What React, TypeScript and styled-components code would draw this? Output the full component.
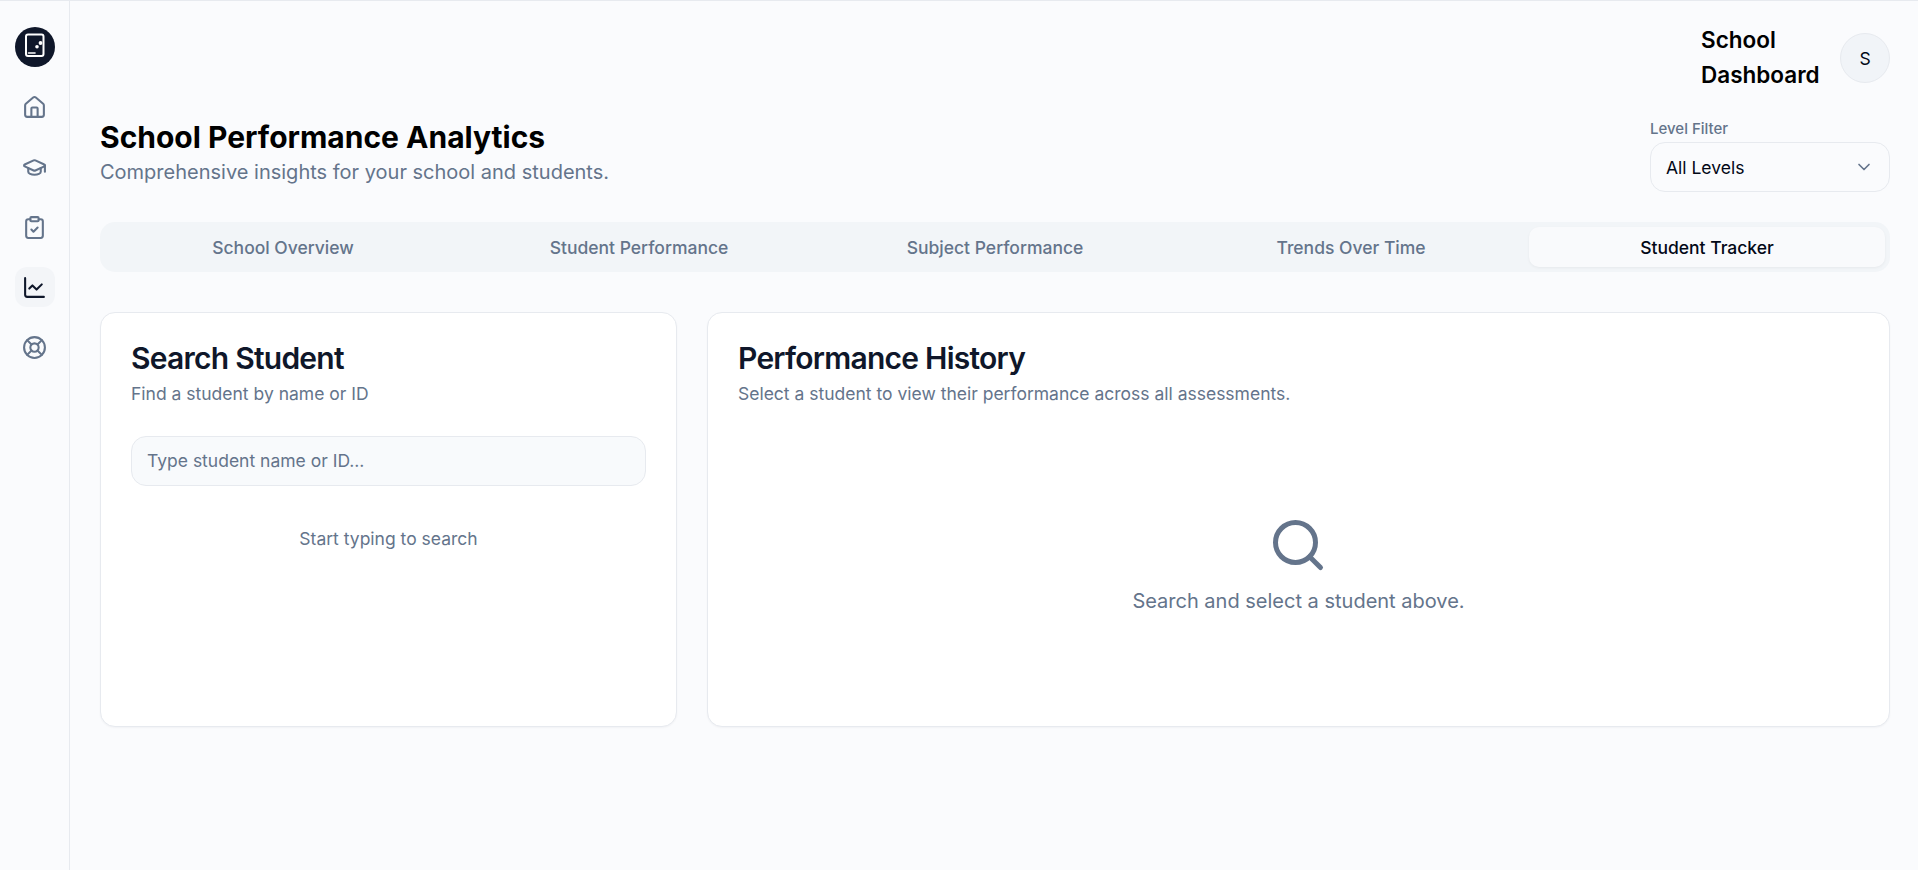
import React from 'react';
import styled, { createGlobalStyle } from 'styled-components';
import { ChartLine, ChevronDown, ClipboardCheck, GraduationCap, House, LifeBuoy, Search } from 'lucide-react';

const GlobalStyle = createGlobalStyle`
	html, body {
		margin: 0;
		padding: 0;
		background: #fafbfd;
	}

	* {
		box-sizing: border-box;
	}

	body {
		font-family: 'Inter', 'Liberation Sans', sans-serif;
		color: #020817;
	}
`;

const Page = styled.div`
	display: flex;
	height: 870px;
	border-top: 1px solid #e7eaef;
	background: #fafbfd;
	overflow: hidden;
`;

const Sidebar = styled.nav`
	display: flex;
	flex-direction: column;
	align-items: center;
	gap: 20px;
	width: 70px;
	flex-shrink: 0;
	padding-top: 26px;
	border-right: 1px solid #e7eaef;
`;

const Logo = styled.div`
	display: flex;
	align-items: center;
	justify-content: center;
	width: 40px;
	height: 40px;
	border-radius: 50%;
	background: #0f172a;
`;

const NavItem = styled.a<{ $active?: boolean }>`
	display: flex;
	align-items: center;
	justify-content: center;
	width: 40px;
	height: 40px;
	border-radius: 12px;
	color: ${({ $active }) => ($active ? '#0f172a' : '#64748b')};
	background: ${({ $active }) => ($active ? '#f3f5f8' : 'transparent')};
`;

const Main = styled.main`
	flex: 1;
	min-width: 0;
	padding: 22px 28px 0 30px;
`;

const TopBar = styled.header`
	display: flex;
	align-items: center;
	justify-content: flex-end;
	gap: 20px;
`;

const UserName = styled.div`
	width: 119px;
	margin: -1px 0 1px;
	font-size: 22.5px;
	font-weight: 600;
	line-height: 35px;
	color: #000000;
`;

const Avatar = styled.div`
	display: flex;
	align-items: center;
	justify-content: center;
	width: 50px;
	height: 50px;
	border: 1px solid #e7eaef;
	border-radius: 50%;
	background: #f1f4f8;
	font-size: 17.5px;
	color: #020817;
`;

const PageHead = styled.section`
	display: flex;
	align-items: flex-start;
	justify-content: space-between;
	margin-top: 26px;
`;

const PageTitle = styled.h1`
	margin: 0;
	font-size: 30px;
	font-weight: 700;
	line-height: 37px;
	color: #000000;
`;

const PageSubtitle = styled.p`
	margin: 1px 0 0;
	font-size: 20px;
	line-height: 30px;
	color: #64748b;
`;

const Filter = styled.div`
	width: 240px;
`;

const FilterLabel = styled.div`
	font-size: 15px;
	line-height: 20px;
	font-weight: 500;
	color: #64748b;
`;

const Select = styled.div`
	display: flex;
	align-items: center;
	justify-content: space-between;
	height: 50px;
	margin-top: 3px;
	padding: 0 15px;
	border: 1px solid #e7eaef;
	border-radius: 15px;
	font-size: 17.5px;
	color: #020817;

	svg {
		color: #64748b;
	}
`;

const Tabs = styled.div`
	display: grid;
	grid-template-columns: repeat(5, 1fr);
	height: 50px;
	margin-top: 30px;
	padding: 5px;
	border-radius: 15px;
	background: #f2f5f8;
`;

const Tab = styled.button<{ $active?: boolean }>`
	border: 0;
	border-radius: 10px;
	font-family: inherit;
	font-size: 17.5px;
	font-weight: 500;
	color: ${({ $active }) => ($active ? '#020817' : '#64748b')};
	background: ${({ $active }) => ($active ? '#f9fafc' : 'transparent')};
	box-shadow: ${({ $active }) => ($active ? '0 1px 3px rgba(0, 0, 0, 0.05)' : 'none')};
`;

const Columns = styled.div`
	display: grid;
	grid-template-columns: 577px 1fr;
	gap: 30px;
	margin-top: 40px;
`;

const Card = styled.section`
	height: 415px;
	padding: 30px;
	border: 1px solid #e7eaef;
	border-radius: 15px;
	background: #ffffff;
	box-shadow: 0 1px 2px rgba(15, 23, 42, 0.04);
`;

const CardTitle = styled.h2`
	margin: 0;
	font-size: 30px;
	font-weight: 600;
	line-height: 30px;
	letter-spacing: -0.75px;
	color: #0f172a;
`;

const CardSubtitle = styled.p`
	margin: 8px 0 0;
	font-size: 17.5px;
	line-height: 25px;
	color: #64748b;
`;

const SearchInput = styled.input`
	display: block;
	width: 100%;
	height: 50px;
	margin-top: 30px;
	padding: 0 15px 2px;
	border: 1px solid #e7eaef;
	border-radius: 15px;
	background: #f8fafc;
	font-family: inherit;
	font-size: 17.5px;
	outline: none;

	&::placeholder {
		color: #64748b;
		opacity: 1;
	}
`;

const Hint = styled.p`
	margin: 40px 0 0;
	font-size: 17.5px;
	line-height: 25px;
	text-align: center;
	color: #64748b;
`;

const EmptyState = styled.div`
	display: flex;
	flex-direction: column;
	align-items: center;
	gap: 11px;
	padding-top: 109px;
	color: #64748b;

	svg {
		margin-right: 1px;
	}
`;

const EmptyText = styled.p`
	margin: 0;
	font-size: 20px;
	line-height: 30px;
`;

const LogoMark = () => (
	<svg width="30" height="30" viewBox="0 0 30 30" fill="none" stroke="#ffffff" strokeWidth="2" strokeLinecap="round">
		<rect x="6" y="2.5" width="17.5" height="21.5" rx="2" />
		<path d="M8.5 21h6.5" strokeWidth="1.6" />
		<circle cx="20.5" cy="11" r="1.9" fill="#ffffff" stroke="none" />
		<circle cx="17" cy="14.7" r="1.8" fill="#ffffff" stroke="none" />
	</svg>
);

const tabs = ['School Overview', 'Student Performance', 'Subject Performance', 'Trends Over Time', 'Student Tracker'];

const App = (): JSX.Element => {
	return (
		<>
			<GlobalStyle />
			<Page>
				<Sidebar>
					<Logo>
						<LogoMark />
					</Logo>
					<NavItem><House size={25} /></NavItem>
					<NavItem><GraduationCap size={25} /></NavItem>
					<NavItem><ClipboardCheck size={25} /></NavItem>
					<NavItem $active><ChartLine size={25} /></NavItem>
					<NavItem><LifeBuoy size={25} /></NavItem>
				</Sidebar>
				<Main>
					<TopBar>
						<UserName>School Dashboard</UserName>
						<Avatar>S</Avatar>
					</TopBar>
					<PageHead>
						<div>
							<PageTitle>School Performance Analytics</PageTitle>
							<PageSubtitle>Comprehensive insights for your school and students.</PageSubtitle>
						</div>
						<Filter>
							<FilterLabel>Level Filter</FilterLabel>
							<Select>
								All Levels
								<ChevronDown size={20} />
							</Select>
						</Filter>
					</PageHead>
					<Tabs>
						{tabs.map((tab) => (
							<Tab key={tab} $active={tab === 'Student Tracker'}>{tab}</Tab>
						))}
					</Tabs>
					<Columns>
						<Card>
							<CardTitle>Search Student</CardTitle>
							<CardSubtitle>Find a student by name or ID</CardSubtitle>
							<SearchInput placeholder="Type student name or ID..." />
							<Hint>Start typing to search</Hint>
						</Card>
						<Card>
							<CardTitle>Performance History</CardTitle>
							<CardSubtitle>Select a student to view their performance across all assessments.</CardSubtitle>
							<EmptyState>
								<Search size={60} strokeWidth={2} />
								<EmptyText>Search and select a student above.</EmptyText>
							</EmptyState>
						</Card>
					</Columns>
				</Main>
			</Page>
		</>
	);
};

export default App;
